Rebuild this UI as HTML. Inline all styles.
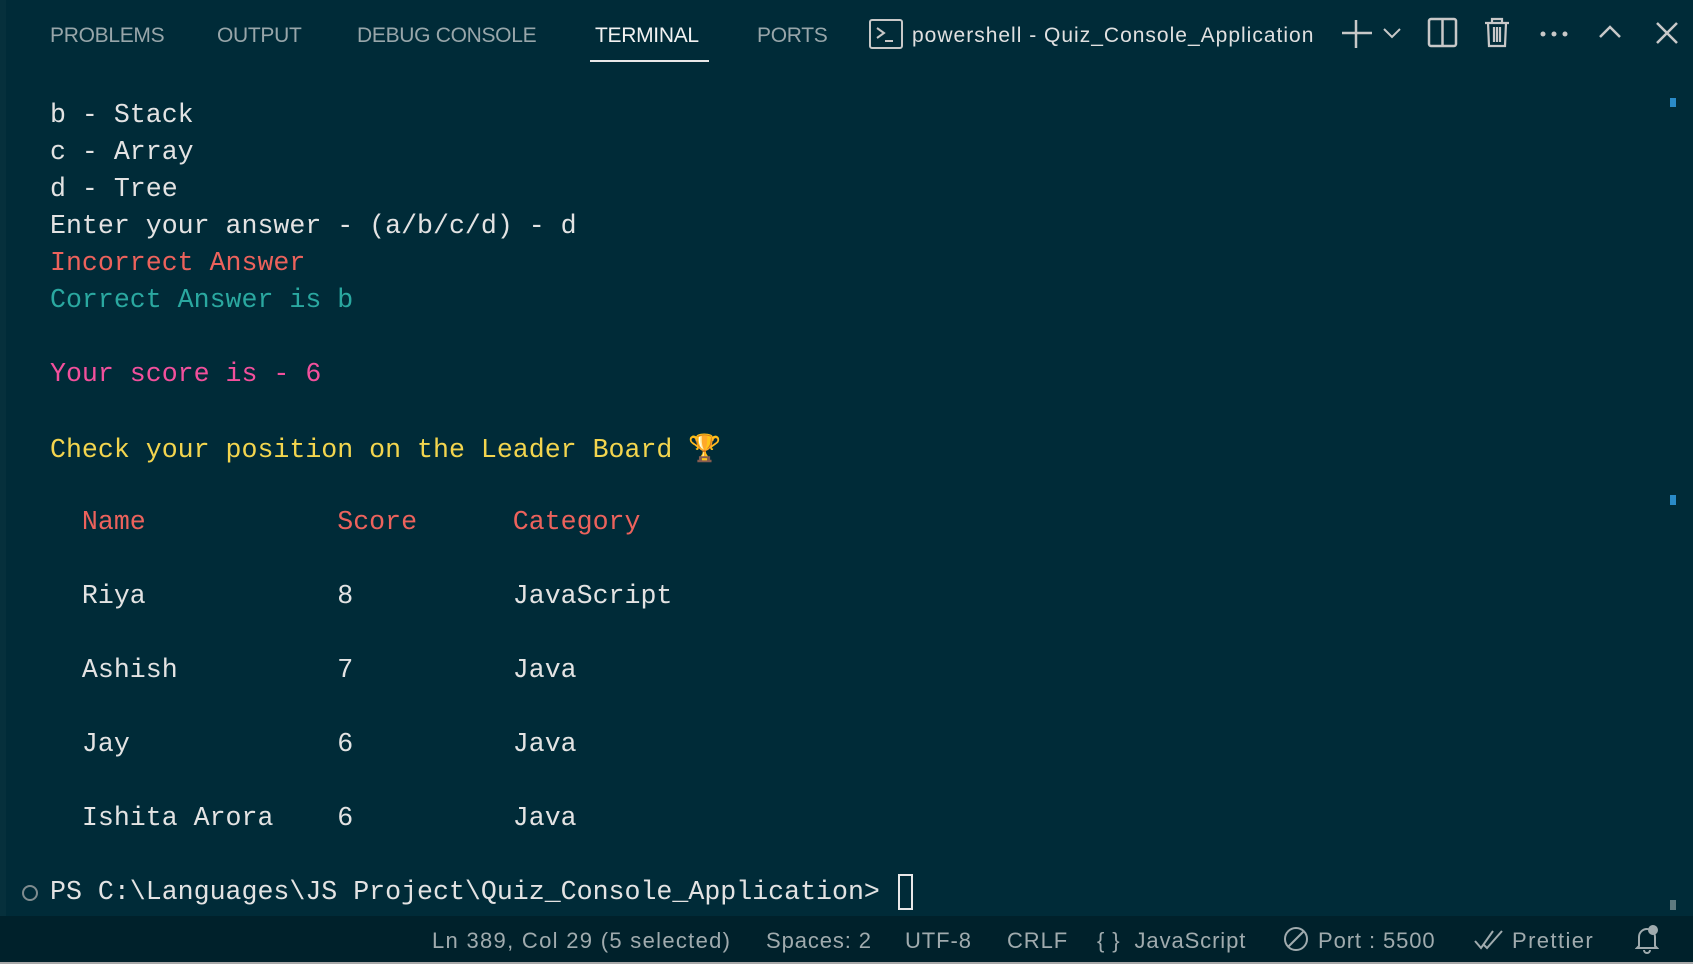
<!DOCTYPE html>
<html><head><meta charset="utf-8"><style>
*{margin:0;padding:0;box-sizing:border-box}
body{width:1693px;height:964px;background:#002b38;overflow:hidden;position:relative;font-family:"Liberation Sans",sans-serif}
.tab{position:absolute;top:24px;font-size:21px;color:#98a6aa;letter-spacing:-0.3px}
.t{position:absolute;left:50px;font-family:"Liberation Mono","DejaVu Sans Mono",monospace;font-size:26.6px;color:#e3e3e3;white-space:pre;line-height:37px}
.sb{position:absolute;top:928px;font-size:22px;color:#a0abae;letter-spacing:0.9px}
svg{position:absolute}
</style></head><body>
<div style="position:absolute;left:0;top:0;width:6px;height:916px;background:#06303c"></div>
<div class="tab" style="left:50px">PROBLEMS</div>
<div class="tab" style="left:217px">OUTPUT</div>
<div class="tab" style="left:357px">DEBUG CONSOLE</div>
<div class="tab" style="left:595px;color:#f2f2f2">TERMINAL</div>
<div style="position:absolute;left:590px;top:60px;width:119px;height:2px;background:#e8e8e8"></div>
<div class="tab" style="left:757px">PORTS</div>
<svg style="left:868px;top:18px" width="36" height="32" viewBox="0 0 36 32" fill="none" stroke="#c8c8c8" stroke-width="2"><rect x="2" y="2" width="32" height="28" rx="2"/><path d="M9 10l7 5-7 5M17 23h8"/></svg>
<div class="tab" style="left:912px;color:#e0e0e0;letter-spacing:1px">powershell - Quiz_Console_Application</div>
<svg style="left:1340px;top:18px" width="34" height="32" fill="none" stroke="#c8c8c8" stroke-width="2.5"><path d="M16 2v28M2 15h30"/></svg>
<svg style="left:1382px;top:26px" width="20" height="14" fill="none" stroke="#c8c8c8" stroke-width="2"><path d="M2 3l8 8 8-8"/></svg>
<svg style="left:1427px;top:17px" width="32" height="32" fill="none" stroke="#c8c8c8" stroke-width="2.5"><rect x="2" y="2" width="27" height="27" rx="2"/><path d="M15.5 2v27"/></svg>
<svg style="left:1483px;top:17px" width="28" height="32" fill="none" stroke="#c8c8c8" stroke-width="2.2"><path d="M2 6h24M9 6V2h10v4M5 6l1 23h16l1-23M11 10v15M14 10v15M17 10v15"/></svg>
<svg style="left:1538px;top:29px" width="32" height="10" fill="#c8c8c8"><circle cx="5" cy="5" r="2.5"/><circle cx="16" cy="5" r="2.5"/><circle cx="27" cy="5" r="2.5"/></svg>
<svg style="left:1598px;top:24px" width="24" height="16" fill="none" stroke="#c8c8c8" stroke-width="2.5"><path d="M2 13l10-10 10 10"/></svg>
<svg style="left:1655px;top:21px" width="24" height="24" fill="none" stroke="#c8c8c8" stroke-width="2.5"><path d="M2 2l20 20M22 2L2 22"/></svg>

<div class="t" style="top:97px">b - Stack</div>
<div class="t" style="top:134px">c - Array</div>
<div class="t" style="top:171px">d - Tree</div>
<div class="t" style="top:208px">Enter your answer - (a/b/c/d) - d</div>
<div class="t" style="top:245px;color:#ec625c">Incorrect Answer</div>
<div class="t" style="top:282px;color:#2aa8a0">Correct Answer is b</div>
<div class="t" style="top:356px;color:#f2509c">Your score is - 6</div>
<div class="t" style="top:430px;color:#f3d54e">Check your position on the Leader Board <span style="font-family:'DejaVu Sans',sans-serif;color:#e0a020">🏆</span></div>
<div class="t" style="top:504px;color:#ec625c">  Name            Score      Category</div>
<div class="t" style="top:578px">  Riya            8          JavaScript</div>
<div class="t" style="top:652px">  Ashish          7          Java</div>
<div class="t" style="top:726px">  Jay             6          Java</div>
<div class="t" style="top:800px">  Ishita Arora    6          Java</div>
<div class="t" style="top:874px">PS C:\Languages\JS Project\Quiz_Console_Application&gt;</div>
<div style="position:absolute;left:898px;top:874px;width:15px;height:36px;border:2px solid #e8e8e8"></div>
<div style="position:absolute;left:22px;top:885px;width:16px;height:16px;border:2px solid #7f8c8f;border-radius:50%"></div>
<div style="position:absolute;left:1670px;top:98px;width:6px;height:9px;background:#2a8bc8"></div>
<div style="position:absolute;left:1670px;top:495px;width:6px;height:10px;background:#2a8bc8"></div>
<div style="position:absolute;left:1670px;top:900px;width:6px;height:10px;background:#5f7a80"></div>

<div style="position:absolute;left:0;top:916px;width:1693px;height:46px;background:#00212b"></div>
<div style="position:absolute;left:0;top:962px;width:1693px;height:2px;background:#a8a8a8"></div>
<div class="sb" style="left:432px;letter-spacing:1.3px">Ln 389, Col 29 (5 selected)</div>
<div class="sb" style="left:766px">Spaces: 2</div>
<div class="sb" style="left:905px">UTF-8</div>
<div class="sb" style="left:1007px">CRLF</div>
<div class="sb" style="left:1097px">{ }&nbsp; JavaScript</div>
<svg style="left:1283px;top:926px" width="26" height="26" fill="none" stroke="#a0abae" stroke-width="2"><circle cx="13" cy="13" r="11"/><path d="M5 21L21 5"/></svg>
<div class="sb" style="left:1318px">Port : 5500</div>
<svg style="left:1474px;top:929px" width="30" height="22" fill="none" stroke="#a0abae" stroke-width="2"><path d="M1 12l6 7L19 2M10 16l3 3L28 2"/></svg>
<div class="sb" style="left:1512px;letter-spacing:1.4px">Prettier</div>
<svg style="left:1635px;top:924px" width="24" height="30" fill="none" stroke="#a0abae" stroke-width="2"><path d="M4 22V13a8 8 0 0 1 16 0v9l2 2H2zM9 26a3 3 0 0 0 6 0"/><circle cx="18" cy="6" r="4" fill="#a0abae"/></svg>
</body></html>
